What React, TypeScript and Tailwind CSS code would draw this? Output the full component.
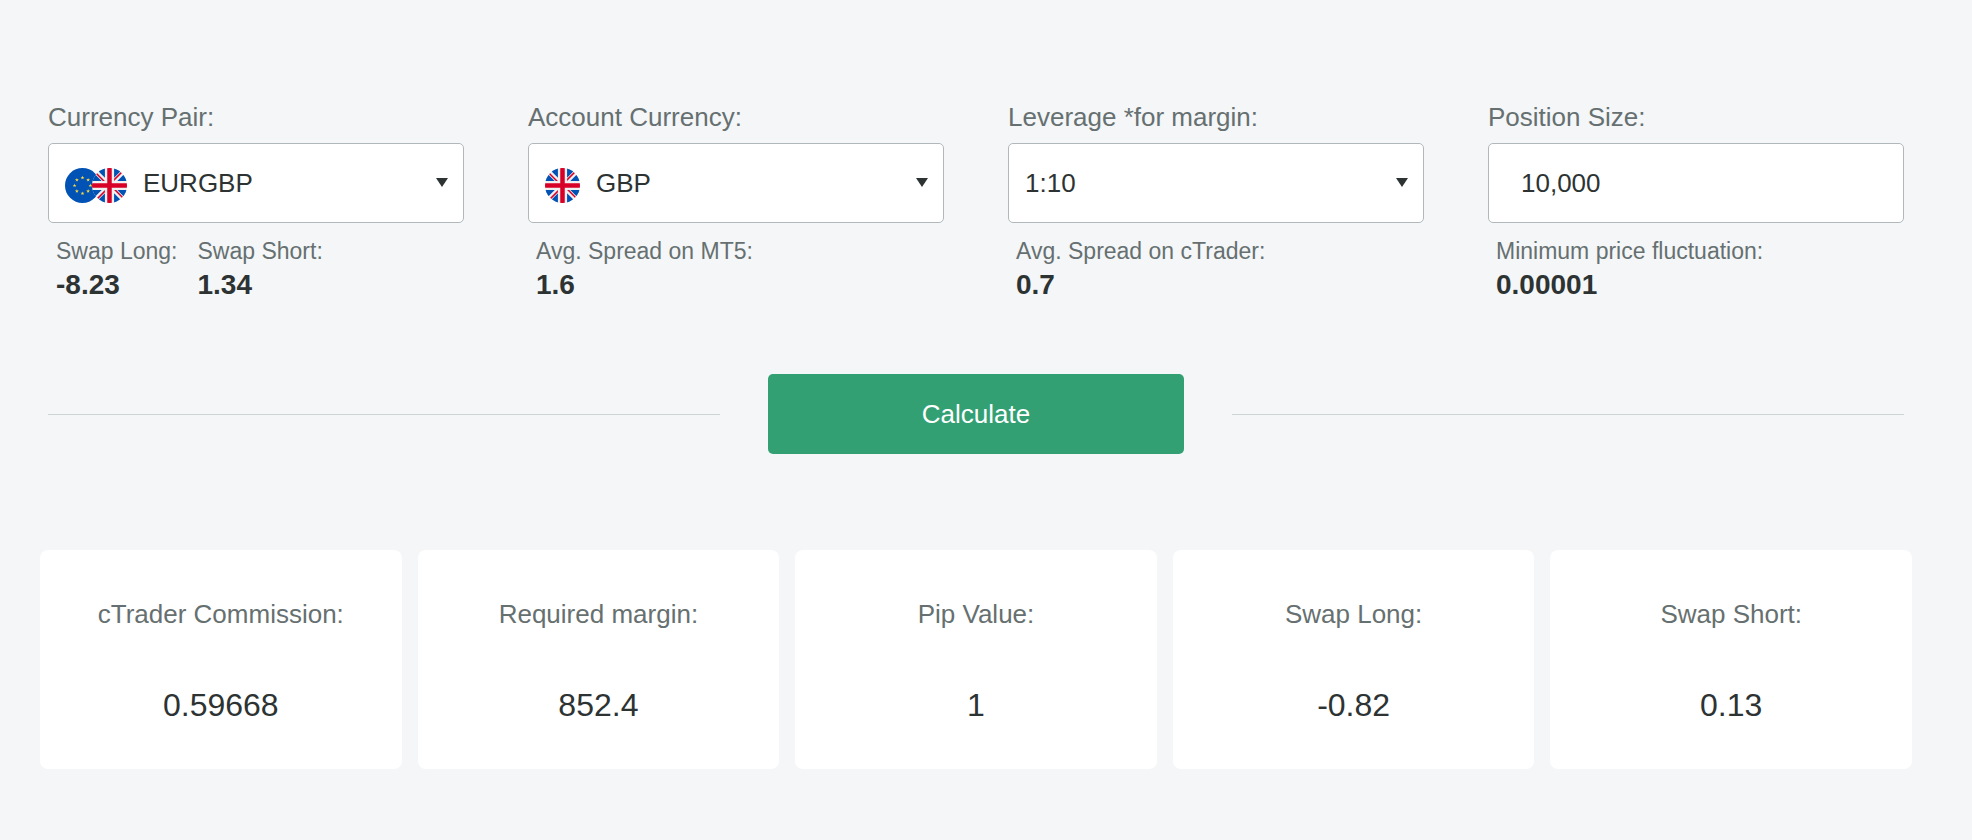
import { ReactNode, useId, useState } from "react"

const PAIRS = ["EURGBP", "EURUSD", "GBPUSD", "USDJPY"]
const CURRENCIES = ["GBP", "EUR", "USD"]
const LEVERAGES = ["1:10", "1:20", "1:30", "1:50"]

const RESULTS = [
    { label: "cTrader Commission:", value: "0.59668" },
    { label: "Required margin:", value: "852.4" },
    { label: "Pip Value:", value: "1" },
    { label: "Swap Long:", value: "-0.82" },
    { label: "Swap Short:", value: "0.13" },
]

function FlagEU({ className }: { className?: string }) {
    const stars = [0, 45, 90, 135, 180, 225, 270, 315]

    return (
        <svg viewBox="0 0 512 512" className={className} aria-hidden="true">
            <circle cx="256" cy="256" r="256" fill="#0052b4" />
            {stars.map((angle) => {
                const x = 256 + 116 * Math.sin((angle * Math.PI) / 180)
                const y = 256 - 116 * Math.cos((angle * Math.PI) / 180)
                return (
                    <path
                        key={angle}
                        transform={`translate(${x} ${y})`}
                        d="M0-29 6.5-9H28L11 4l6.500 20L0 12-17.500 24-11 4-28-9H-6.500z"
                        fill="#ffda44"
                    />
                )
            })}
        </svg>
    )
}

function FlagUK({ className }: { className?: string }) {
    const clip = useId()

    return (
        <svg viewBox="0 0 512 512" className={className} aria-hidden="true">
            <clipPath id={clip}>
                <circle cx="256" cy="256" r="256" />
            </clipPath>
            <g clipPath={`url(#${clip})`}>
                <rect width="512" height="512" fill="#f0f0f0" />
                <path
                    fill="#0052b4"
                    d="M0 47 142 189H0zM47 0 189 142V0zM465 0 323 142V0zM512 47 370 189H512zM512 465 370 323H512zM465 512 323 370V512zM47 512 189 370V512zM0 465 142 323H0z"
                />
                <path
                    fill="#d80027"
                    d="M223 0H289V223H512V289H289V512H223V289H0V223H223zM189 189H158L-31 0H0zM323 189V158L481 0H512zM323 323H354L543 512H512zM189 323V354L31 512H0z"
                />
            </g>
        </svg>
    )
}

interface SelectFieldProps {
    label: string
    options: string[]
    icon?: ReactNode
    padding?: string
    children: ReactNode
}

function SelectField({ label, options, icon, padding = "pl-4", children }: SelectFieldProps) {
    const id = useId()
    const [value, setValue] = useState(options[0])

    return (
        <div>
            <label htmlFor={id} className="block text-[26px] leading-8 text-[#667070]">{label}</label>
            <div className="relative mt-2.5">
                <select
                    id={id}
                    value={value}
                    onChange={(e) => setValue(e.target.value)}
                    className={`block h-20 w-full appearance-none rounded-[5px] border border-[#b0b8bb] bg-white pr-10 text-[26px] text-[#2d3333] ${padding}`}
                >
                    {options.map((option) => <option key={option}>{option}</option>)}
                </select>
                {icon && (
                    <div className="pointer-events-none absolute inset-y-0 left-[17px] flex items-center pt-1">
                        {icon}
                    </div>
                )}
                <svg viewBox="0 0 12 9" className="pointer-events-none absolute right-4 top-[35px] h-[9px] w-3" aria-hidden="true">
                    <path d="M0 0H12L6 9z" fill="#2d3333" />
                </svg>
            </div>
            <div className="mt-3 flex gap-5 pl-2">{children}</div>
        </div>
    )
}

function Info({ label, value }: { label: string; value: string }) {
    return (
        <div>
            <div className="text-[23px] leading-8 text-[#667070]">{label}</div>
            <div className="text-[28px] font-bold leading-9 text-[#2d3333]">{value}</div>
        </div>
    )
}

export default function App() {
    const [size, setSize] = useState("10,000")

    return (
        <main className="min-h-screen bg-[#f4f6f8] pb-[71px] pl-10 pr-[60px] pt-[101px] font-['Liberation_Sans',Arial,sans-serif]">
            <form onSubmit={(e) => e.preventDefault()} className="px-2">
                <div className="grid grid-cols-4 gap-16">
                    <SelectField
                        label="Currency Pair:"
                        options={PAIRS}
                        padding="pl-[94px]"
                        icon={
                            <>
                                <FlagEU className="size-[35px]" />
                                <FlagUK className="-ml-2 size-[35px]" />
                            </>
                        }
                    >
                        <Info label="Swap Long:" value="-8.23" />
                        <Info label="Swap Short:" value="1.34" />
                    </SelectField>
                    <SelectField
                        label="Account Currency:"
                        options={CURRENCIES}
                        padding="pl-[67px]"
                        icon={<FlagUK className="size-[35px]" />}
                    >
                        <Info label="Avg. Spread on MT5:" value="1.6" />
                    </SelectField>
                    <SelectField label="Leverage *for margin:" options={LEVERAGES}>
                        <Info label="Avg. Spread on cTrader:" value="0.7" />
                    </SelectField>
                    <div>
                        <label htmlFor="size" className="block text-[26px] leading-8 text-[#667070]">Position Size:</label>
                        <input
                            id="size"
                            type="text"
                            value={size}
                            onChange={(e) => setSize(e.target.value)}
                            className="mt-2.5 block h-20 w-full rounded-[5px] border border-[#b0b8bb] bg-white px-8 text-[26px] text-[#2d3333]"
                        />
                        <div className="mt-3 pl-2">
                            <Info label="Minimum price fluctuation:" value="0.00001" />
                        </div>
                    </div>
                </div>

                <div className="mt-[71px] flex items-center gap-12">
                    <div className="h-px flex-1 bg-[#cfd4d7]" />
                    <button type="submit" className="h-20 w-[416px] rounded-[5px] bg-[#33a074] text-[26px] text-white">
                        Calculate
                    </button>
                    <div className="h-px flex-1 bg-[#cfd4d7]" />
                </div>
            </form>

            <div className="mt-24 grid grid-cols-5 gap-4 text-center">
                {RESULTS.map(({ label, value }) => (
                    <div key={label} className="rounded-lg bg-white pb-11 pt-12">
                        <div className="text-[26px] leading-8 text-[#667070]">{label}</div>
                        <div className="mt-[55px] text-[32px] leading-10 text-[#2d3333]">{value}</div>
                    </div>
                ))}
            </div>
        </main>
    )
}
